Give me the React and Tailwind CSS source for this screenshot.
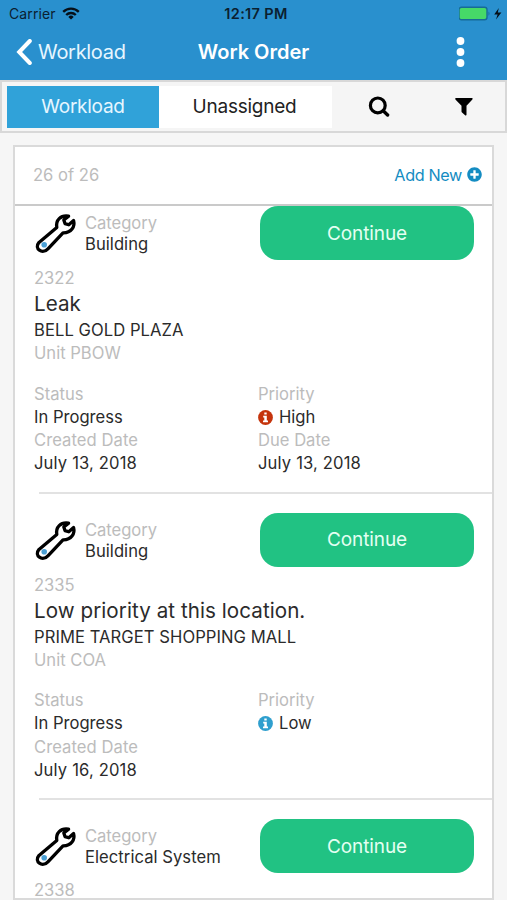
import React from "react";
import { FaPlusCircle } from "react-icons/fa";

const orders = [
  {
    id: "2322",
    category: "Building",
    title: "Leak",
    place: "BELL GOLD PLAZA",
    unit: "Unit PBOW",
    status: "In Progress",
    priority: "High",
    created: "July 13, 2018",
    due: "July 13, 2018",
  },
  {
    id: "2335",
    category: "Building",
    title: "Low priority at this location.",
    place: "PRIME TARGET SHOPPING MALL",
    unit: "Unit COA",
    status: "In Progress",
    priority: "Low",
    created: "July 16, 2018",
  },
  { id: "2338", category: "Electrical System" },
];

function Wrench() {
  return (
    <svg className="mt-[6px] h-[42px] w-[42px] shrink-0" viewBox="0 0 42 42" fill="none">
      <path
        d="M4 30.4 L21.8 15.4 C20.6 8 25.4 3 33.6 4.2 L28.8 8 L30 11.6 L33.8 12.8 L38.6 8.6 C40.2 14.6 36.4 21 28 20.8 L13.2 36.6 C7.4 43 -1.4 36.6 4 30.4 Z"
        stroke="#000"
        strokeWidth="3.3"
        strokeLinejoin="round"
      />
      <circle cx="9.2" cy="32.7" r="2.8" fill="#4a9fd4" />
    </svg>
  );
}

function InfoDot({ className }) {
  return (
    <svg className={className} viewBox="0 0 15 15">
      <circle cx="7.5" cy="7.5" r="7.4" fill="currentColor" />
      <path d="M6.3 2.4 H8.7 V4.6 H6.3 Z M5.2 5.8 H8.8 V10.6 H10 V12.3 H5 V10.6 H6.3 V7.4 H5.2 Z" fill="#fff" />
    </svg>
  );
}

function Order({ o }) {
  return (
    <div className={o.title ? "h-[306.5px] shrink-0" : "shrink-0"}>
      <div className="flex h-[54px] pl-[20px]">
        <Wrench />
        <div className="w-[183px] pl-[8px] pt-[7px] text-[16.6px] leading-[21px]">
          <div className="tracking-[-0.05px] text-[#bcbcbc]">Category</div>
          <div className="whitespace-nowrap tracking-[0.05px]">{o.category}</div>
        </div>
        <button className="h-[54px] w-[214px] rounded-[18px] bg-[#21c283] pt-[2px] text-[19px] tracking-[-0.1px] text-[#e4fff2]">
          Continue
        </button>
      </div>
      <div className="pl-[19px] pt-[6px] text-[16.6px]">
        <div className={o.title ? "h-[24px] leading-[24px] text-[#bcbcbc]" : "pt-[2px] leading-[19px] text-[#bcbcbc]"}>
          {o.id}
        </div>
        {o.title && (
          <>
            <div className="h-[28px] text-[20.6px] leading-[28px] tracking-[0.06px]">{o.title}</div>
            <div className="h-[24px] leading-[24px] tracking-[0.06px]">{o.place}</div>
            <div className="h-[22px] leading-[22px] text-[#bcbcbc]">{o.unit}</div>
          </>
        )}
      </div>
      {o.title && (
        <>
          <div className="grid grid-cols-[224px_1fr] pl-[19px] pt-[18.6px] text-[16.6px] leading-[23.2px]">
            <div>
              <div className="text-[#bcbcbc]">Status</div>
              <div>{o.status}</div>
              <div className="tracking-[0.06px] text-[#bcbcbc]">Created Date</div>
              <div className="tracking-[0.15px]">{o.created}</div>
            </div>
            <div>
              <div className="text-[#bcbcbc]">Priority</div>
              <div className="flex items-center">
                <InfoDot
                  className={o.priority === "High" ? "mr-[6px] size-[15px] text-[#c5340c]" : "mr-[6px] size-[15px] text-[#2f9fce]"}
                />
                {o.priority}
              </div>
              {o.due && (
                <>
                  <div className="text-[#bcbcbc]">Due Date</div>
                  <div className="tracking-[0.15px]">{o.due}</div>
                </>
              )}
            </div>
          </div>
          <div className="ml-[24px] mt-[16.4px] h-[2px] bg-[#e2e2e2]" />
        </>
      )}
    </div>
  );
}

export default function App() {
  return (
    <div className="flex h-[900px] w-[507px] flex-col overflow-hidden bg-[#f6f6f6] font-['Inter',sans-serif] text-[#2b2b2b]">
      <header className="h-[80px] shrink-0 bg-[#2990ce]">
        <div className="grid h-[27px] grid-cols-[1fr_auto_1fr] items-center pl-[9px] pr-[4px] text-[14px] text-[#0b2030]">
          <div className="flex items-center tracking-[0.1px]">
            Carrier
            <svg className="ml-[6px] h-[13px] w-[18px]" viewBox="0 0 18 13" fill="none" stroke="#061019" strokeWidth="2.3">
              <path d="M1.2 4.9 A11 11 0 0 1 16.8 4.9" />
              <path d="M4.2 8 A6.8 6.8 0 0 1 13.8 8" />
              <path d="M9 12.6 L6.3 9.9 A3.8 3.8 0 0 1 11.7 9.9 Z" fill="#061019" stroke="none" />
            </svg>
          </div>
          <div className="text-[14.5px] font-semibold tracking-[0.35px]">12:17 PM</div>
          <div className="flex items-center justify-end">
            <svg className="h-[16px] w-[44px]" viewBox="0 0 44 16">
              <rect x="0" y="1.2" width="28" height="12.6" rx="2.5" fill="#46d968" stroke="#166b96" strokeWidth="1.4" />
              <path d="M29.5 5.6 Q31.5 7.7 29.5 9.8 Z" fill="#166b96" />
              <path d="M39.8 2 L35.2 8.4 H38.6 L37 13.4 L42.4 6.6 H38.8 Z" fill="#061019" />
            </svg>
          </div>
        </div>
        <div className="grid h-[50px] grid-cols-[1fr_auto_1fr] items-center pl-[16px] pr-[41px] text-white">
          <div className="flex items-center text-[20px] tracking-[-0.3px] text-[#e6f6ff]">
            <svg className="mr-[6px] h-[26px] w-[16px]" viewBox="0 0 16 26" fill="none" stroke="#fff" strokeWidth="4">
              <path d="M13.8 2 L3.2 13 L13.8 24" strokeLinecap="round" />
            </svg>
            Workload
          </div>
          <div className="ml-[25px] text-[20px] font-semibold">Work Order</div>
          <svg className="h-[30px] w-[10px] justify-self-end" viewBox="0 0 10 30" fill="#fff">
            <circle cx="4.5" cy="4" r="3.9" />
            <circle cx="4.5" cy="15" r="3.9" />
            <circle cx="4.5" cy="26" r="3.9" />
          </svg>
        </div>
      </header>

      <nav className="flex h-[53px] shrink-0 items-center border-2 border-[#d8d8d8] bg-[#f5f5f5] pl-[5px] text-[19px] tracking-[-0.25px]">
        <div className="flex h-[42px] w-[152px] items-center justify-center bg-[#30a2d9] pt-px text-[#e6f6ff]">Workload</div>
        <div className="flex h-[42px] w-[173px] items-center justify-center bg-white pr-[2px] pt-px text-[#222]">Unassigned</div>
        <svg className="ml-[36px] h-[21px] w-[22px]" viewBox="0 0 22 21" fill="none" stroke="#000" strokeWidth="3.2">
          <circle cx="9.8" cy="9.4" r="7.4" />
          <path d="M15.2 14.8 L19.6 19" strokeLinecap="round" strokeWidth="3.4" />
        </svg>
        <svg className="ml-[65px] h-[18px] w-[18px]" viewBox="0 0 18 18">
          <path d="M0.6 0 H17.2 Q18 0.5 17.4 1.4 L11.5 7.7 V16.8 Q11.3 17.8 10.4 17.4 L7 14.4 Q6.5 14 6.5 13.4 V7.7 L0.4 1.4 Q0 0.5 0.6 0 Z" fill="#000" />
        </svg>
      </nav>

      <main className="mx-[13px] mt-[12px] flex h-[755px] shrink-0 flex-col overflow-hidden border-2 border-[#dadada] bg-white">
        <div className="flex h-[59px] shrink-0 items-center justify-between border-b-2 border-[#cacaca] pb-px pl-[18px] pr-[10px] text-[16.6px]">
          <span className="text-[#bcbcbc]">26 of 26</span>
          <span className="flex items-center text-[16.2px] tracking-[-0.35px] text-[#148cc2]">
            Add New
            <FaPlusCircle className="ml-[5px] size-[15px]" />
          </span>
        </div>
        <div className="min-h-0 overflow-hidden">
          {orders.map((o) => (
            <Order key={o.id} o={o} />
          ))}
        </div>
      </main>
    </div>
  );
}
